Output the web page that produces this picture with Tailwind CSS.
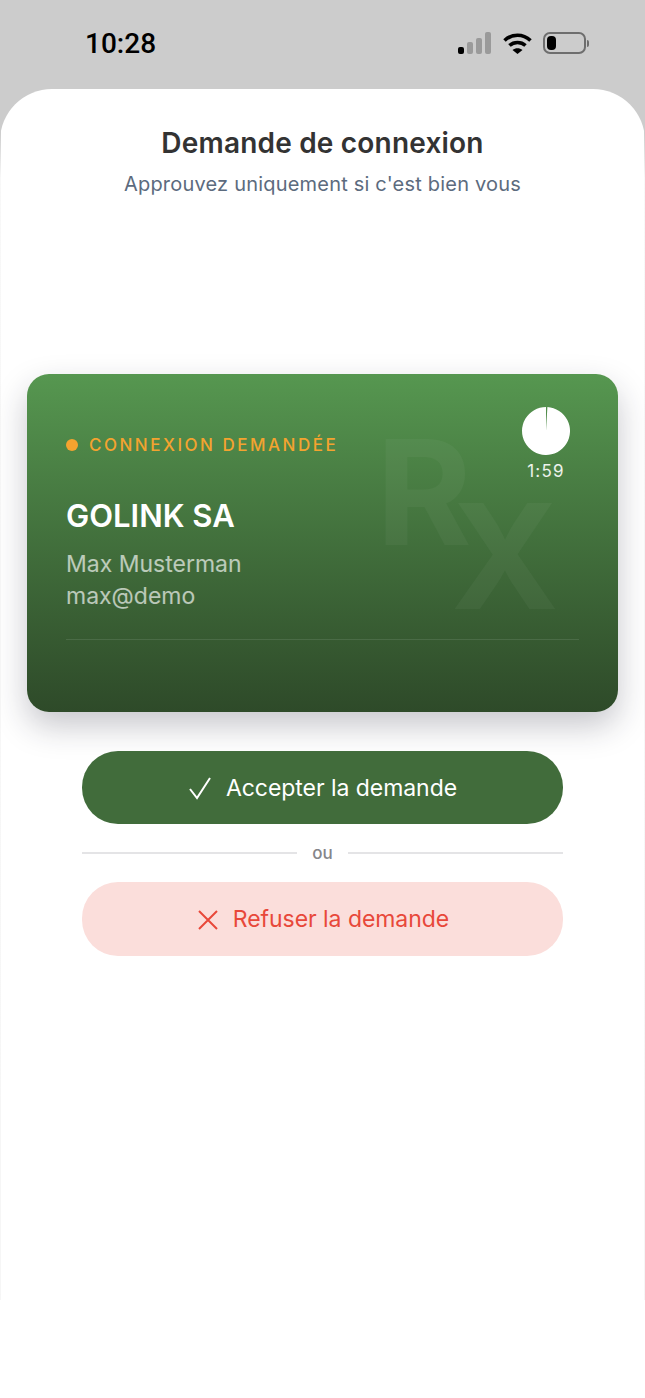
<!DOCTYPE html>
<html lang="fr">

<head>
    <meta charset="UTF-8">
    <meta name="viewport" content="width=device-width, initial-scale=1.0">
    <script src="https://cdn.jsdelivr.net/npm/@tailwindcss/browser@4"></script>
    <title>Demande de connexion</title>
</head>

<body class="bg-white font-['Inter',sans-serif]">
    <div class="w-[645px] h-[1398px] overflow-hidden bg-white">
        <!-- status bar -->
        <div class="h-[160px] bg-[#cccccc] -mb-[71px]">
            <div class="flex items-center justify-between h-[87px] pl-[85px] pr-[56px]">
                <span class="font-['Roboto',sans-serif] font-medium text-[28px] leading-none text-black">10:28</span>
                <div class="flex items-center gap-[11px] -mt-[1px]">
                    <svg width="34" height="22" viewBox="0 0 34 22">
                        <rect x="0" y="15" width="6" height="7" rx="2" fill="#000" />
                        <rect x="9" y="10" width="6" height="12" rx="2" fill="#9a9a9a" />
                        <rect x="18" y="6" width="6" height="16" rx="2" fill="#9a9a9a" />
                        <rect x="27" y="0" width="6" height="22" rx="2" fill="#9a9a9a" />
                    </svg>
                    <svg width="29" height="21" viewBox="0 0 28 21">
                        <path d="M1 7.5 C8.5 0.5 19.5 0.5 27 7.5" fill="none" stroke="#000" stroke-width="3.6" />
                        <path d="M6 12.5 C10.5 8.5 17.5 8.5 22 12.5" fill="none" stroke="#000" stroke-width="3.6" />
                        <path d="M9 17 L14 21 L19 17 C16 14.5 12 14.5 9 17 Z" fill="#000" />
                    </svg>
                    <div class="flex items-center gap-[1px]">
                        <div class="w-[43px] h-[22px] rounded-[7px] border-2 border-[#6e6e6e] p-[2px]">
                            <div class="w-[9px] h-full rounded-[4px] bg-black"></div>
                        </div>
                        <div class="w-[2px] h-[7px] rounded-r-full bg-[#6e6e6e]"></div>
                    </div>
                </div>
            </div>
        </div>

        <!-- sheet -->
        <div class="relative h-[1211px] bg-white rounded-t-[52px] pt-[38px]">
            <!-- faint edges of the sheet -->
            <div class="absolute left-0 top-[42px] w-px h-[1169px] bg-gradient-to-b from-[#cccccc] via-[#f8f8f8] via-[4%] to-[#f6f6f6]"></div>
            <div class="absolute right-0 top-[42px] w-px h-[1169px] bg-gradient-to-b from-[#cccccc] via-[#f8f8f8] via-[4%] to-[#f6f6f6]"></div>

            <h1 class="text-center font-semibold text-[28px] tracking-[0.2px] leading-[32px] text-[#333333]">Demande de connexion</h1>
            <p class="mt-[12px] text-center text-[20px] tracking-[0.2px] leading-[26px] text-[#5c6b7e]">Approuvez uniquement si c'est bien vous</p>

            <!-- card -->
            <div class="relative mt-[177px] mx-[27px] h-[338px] rounded-[22px] overflow-hidden shadow-[0_14px_32px_rgba(30,30,50,0.25)] bg-gradient-to-b from-[#569750] to-[#2e4a29] pl-[39px] pr-[39px]">
                <span class="absolute left-[349px] top-[45px] font-bold text-[146px] leading-[146px] text-white/[0.04]">R</span>
                <span class="absolute left-[424px] top-[109px] font-bold text-[146px] leading-[146px] text-white/[0.04]">X</span>

                <div class="absolute right-[48px] top-[33px] flex flex-col items-center gap-[6px]">
                    <svg width="48" height="48" viewBox="0 0 48 48">
                        <path d="M24 24 L24 0 A24 24 0 1 0 25.4 0.04 Z" fill="#fff" />
                    </svg>
                    <span class="text-[17px] leading-[20px] tracking-[1.2px] text-white/90">1:59</span>
                </div>

                <div class="relative flex items-center gap-[11px] pt-[60px]">
                    <span class="w-[12px] h-[12px] rounded-full bg-[#f4a32f]"></span>
                    <span class="text-[17px] leading-[20px] pt-[1px] font-medium tracking-[2.5px] text-[#f4a32f]">CONNEXION DEMANDÉE</span>
                </div>
                <div class="relative mt-[43px] font-semibold text-[31px] leading-[36px] text-white">GOLINK SA</div>
                <div class="relative mt-[14px] text-[23px] leading-[32px] text-white/65">Max Musterman</div>
                <div class="relative text-[23px] leading-[32px] text-white/65">max@demo</div>
                <div class="relative mt-[27px] h-px bg-white/10"></div>
            </div>

            <!-- actions -->
            <div class="relative mx-[82px] mt-[39px] w-[481px]">
                <button class="flex items-center justify-center gap-[14px] w-full h-[73px] pt-[1px] rounded-[36px] bg-[#416c3b] text-white text-[23px] tracking-[-0.05px]">
                    <svg width="24" height="24" viewBox="0 0 24 24" fill="none" stroke="#fff" stroke-width="2">
                        <path d="M2 13 L9 22 L22 2" />
                    </svg>
                    Accepter la demande
                </button>
                <div class="flex items-center gap-[15px] h-[58px]">
                    <div class="flex-1 h-[2px] bg-[#e4e4e6]"></div>
                    <span class="text-[17px] pt-[1px] font-medium text-[#85858a]">ou</span>
                    <div class="flex-1 h-[2px] bg-[#e4e4e6]"></div>
                </div>
                <button class="flex items-center justify-center gap-[15px] w-full h-[74px] pt-[1px] pl-[2px] rounded-[36px] bg-[#fbdeDb] text-[#e8483a] text-[23px] tracking-[-0.05px]">
                    <svg width="20" height="20" viewBox="0 0 20 20" fill="none" stroke="#e8483a" stroke-width="2">
                        <path d="M1 1 L19 19 M19 1 L1 19" />
                    </svg>
                    Refuser la demande
                </button>
            </div>
        </div>
    </div>
</body>

</html>
